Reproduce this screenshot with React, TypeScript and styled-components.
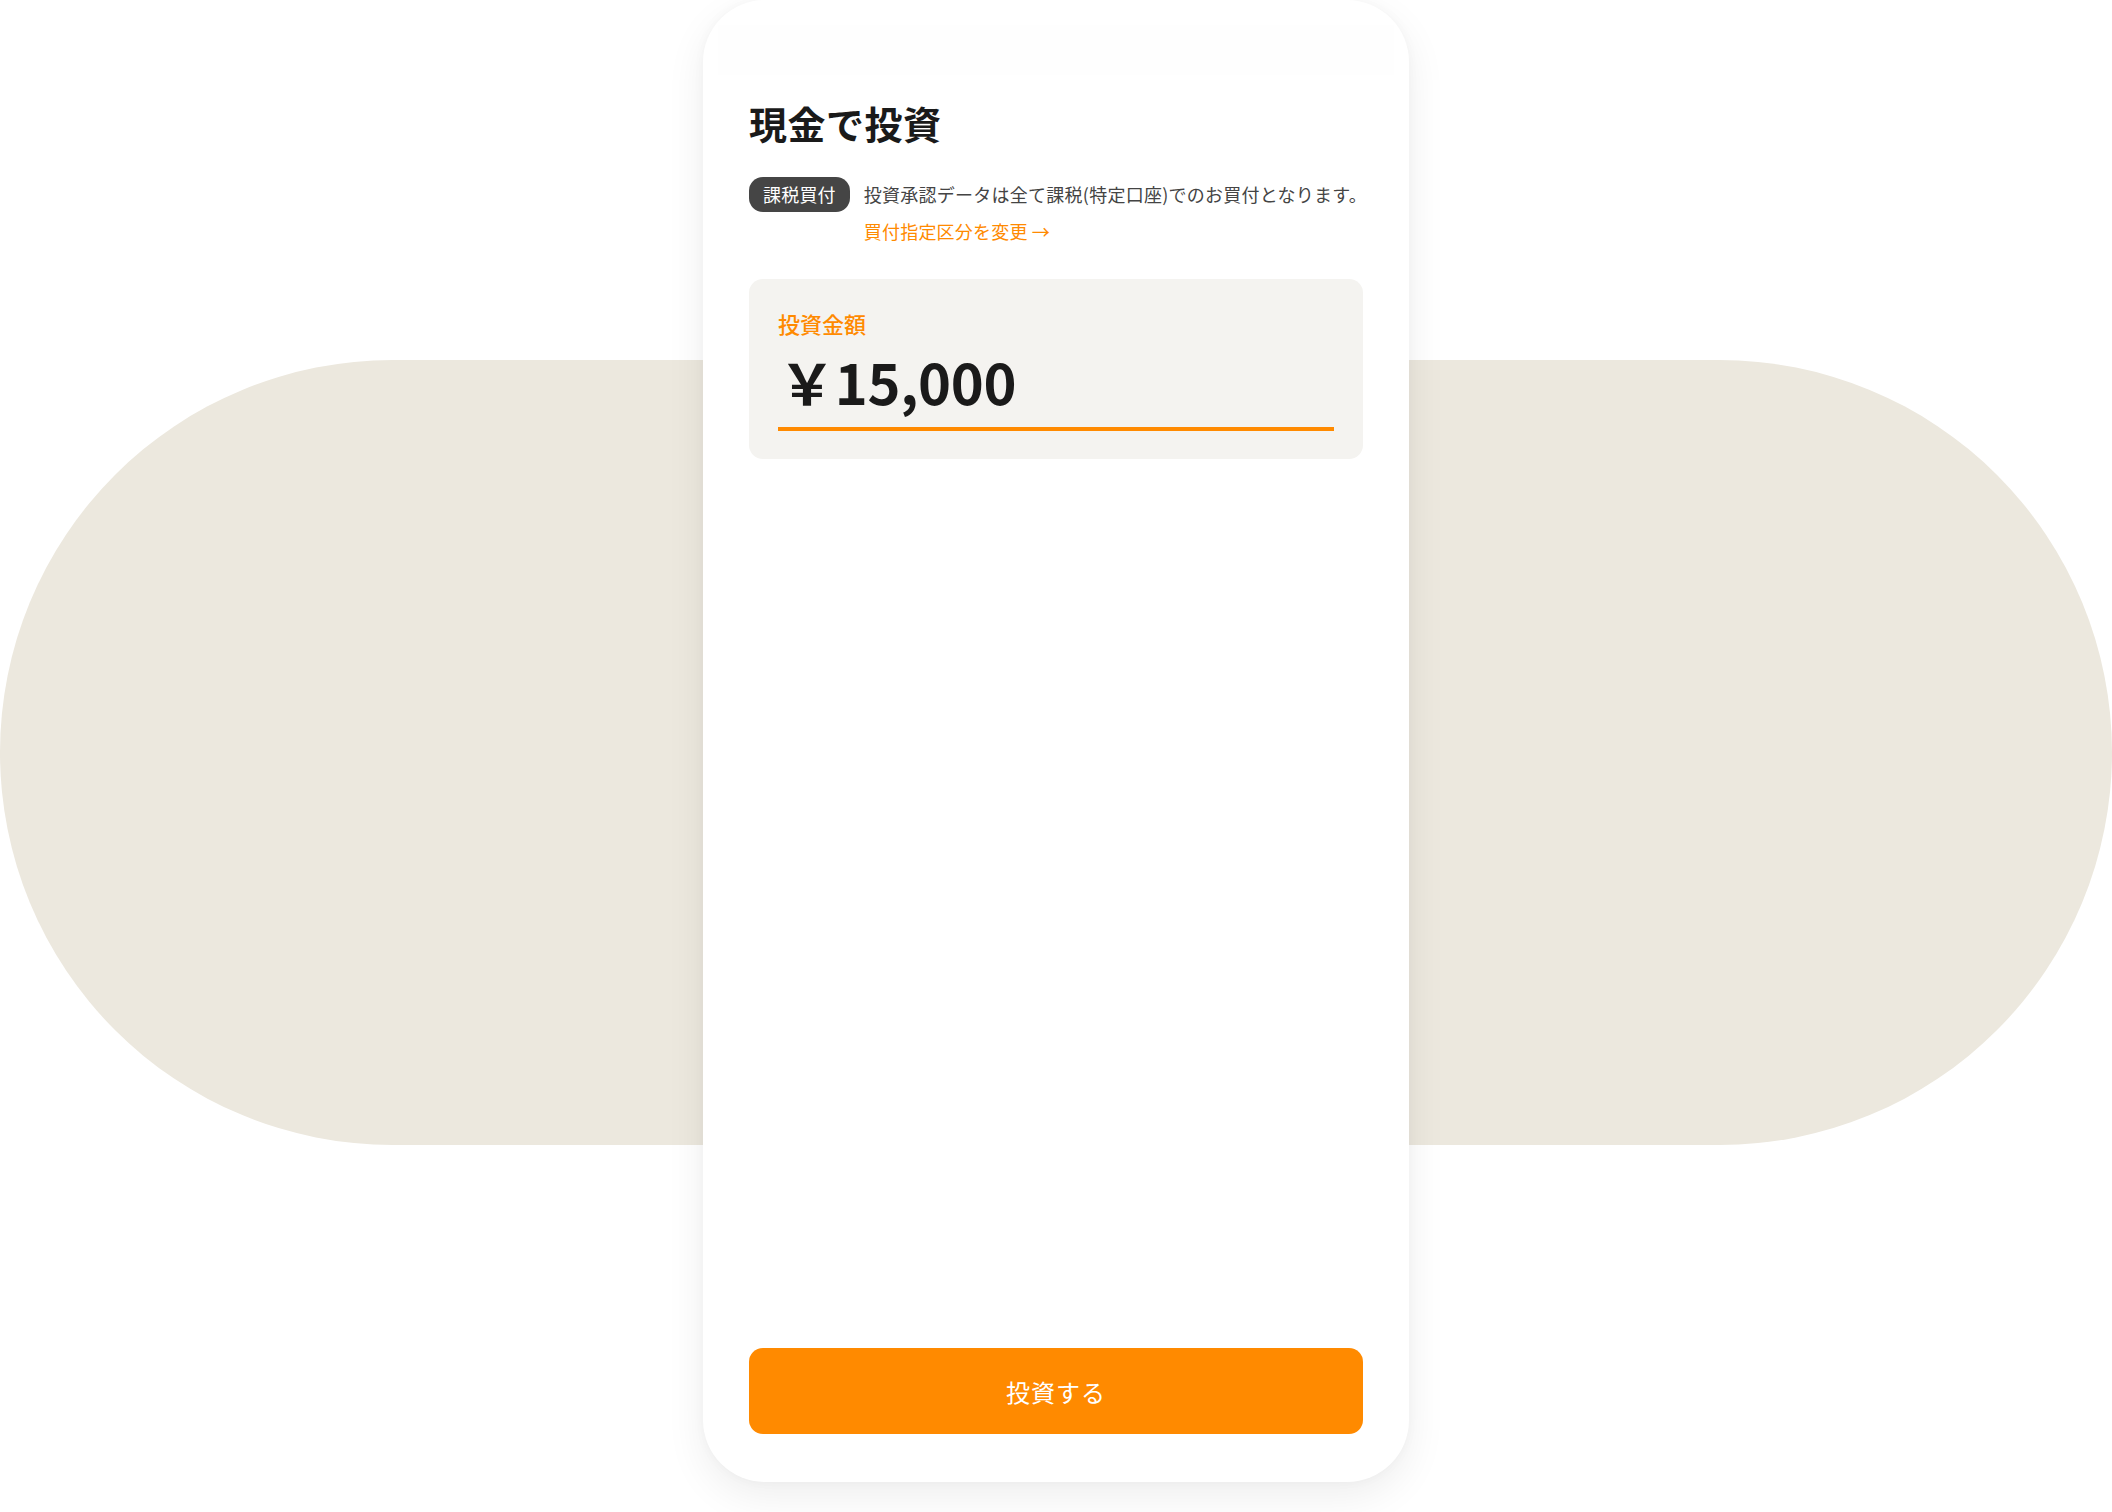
import React from "react";
import styled, { createGlobalStyle } from "styled-components";

const GlobalStyle = createGlobalStyle`
  html, body {
    margin: 0;
    padding: 0;
    background: #ffffff;
  }
  body {
    font-family: "Noto Sans CJK JP", "Noto Sans", sans-serif;
    -webkit-font-smoothing: antialiased;
  }
  * { box-sizing: border-box; }
`;

const Stage = styled.div`
  display: grid;
  width: 2112px;
  height: 1512px;
  overflow: hidden;
`;

const Pill = styled.div`
  grid-area: 1 / 1;
  align-self: start;
  margin-top: 360px;
  height: 785px;
  width: 100%;
  border-radius: 400px;
  background: #ece8de;
`;

const Phone = styled.div`
  grid-area: 1 / 1;
  justify-self: center;
  align-self: start;
  width: 706px;
  height: 1482px;
  background: #ffffff;
  border-radius: 62px;
  box-shadow: 0 14px 40px rgba(0, 0, 0, 0.07), 0 0 12px rgba(0, 0, 0, 0.03);
  display: flex;
  flex-direction: column;
  padding: 25px 46px 48px;
`;

const StatusBar = styled.div`
  height: 50px;
  margin: 0 -31px;
  background: #fefefe;
`;

const Title = styled.h1`
  margin: 21px 0 0;
  font-size: 38px;
  line-height: 53px;
  font-weight: 700;
  color: #1a1a1a;
  letter-spacing: 0.5px;
`;

const NoticeRow = styled.div`
  display: flex;
  align-items: flex-start;
  gap: 14px;
  margin-top: 28px;
`;

const Badge = styled.span`
  flex: none;
  height: 35px;
  padding: 0 14px;
  border-radius: 14px;
  background: #454545;
  color: #ffffff;
  font-size: 18px;
  line-height: 35px;
  letter-spacing: 0.2px;
`;

const NoticeBody = styled.div`
  display: flex;
  flex-direction: column;
`;

const NoticeText = styled.p`
  margin: 0;
  font-size: 18px;
  line-height: 35px;
  color: #444444;
  letter-spacing: 0.25px;
  white-space: nowrap;
`;

const ChangeLink = styled.a`
  margin-top: 6px;
  font-size: 18px;
  line-height: 26px;
  color: #ff8a00;
  text-decoration: none;
  letter-spacing: 0.2px;
`;

const AmountCard = styled.div`
  margin-top: 35px;
  background: #f4f3f0;
  border-radius: 14px;
  padding: 28px 29px 28px;
  display: flex;
  flex-direction: column;
`;

const AmountLabel = styled.label`
  font-size: 22px;
  line-height: 33px;
  font-weight: 500;
  color: #ff8a00;
`;

const AmountField = styled.div`
  margin-top: 5px;
  padding-bottom: 10px;
  border-bottom: 4px solid #ff8a00;
`;

const AmountValue = styled.div`
  font-size: 56px;
  line-height: 72px;
  font-weight: 700;
  color: #1a1a1a;
  letter-spacing: -0.3px;
  padding-left: 1px;
`;

const Spacer = styled.div`
  flex: 1;
`;

const SubmitButton = styled.button`
  height: 86px;
  width: 100%;
  border: none;
  border-radius: 14px;
  background: #ff8a00;
  color: #ffffff;
  font-family: inherit;
  font-size: 24px;
  font-weight: 400;
  letter-spacing: 1px;
  cursor: pointer;
`;

export default function App() {
  return (
    <>
      <GlobalStyle />
      <Stage>
        <Pill />
        <Phone>
          <StatusBar />
          <Title>現金で投資</Title>
          <NoticeRow>
            <Badge>課税買付</Badge>
            <NoticeBody>
              <NoticeText>投資承認データは全て課税(特定口座)でのお買付となります。</NoticeText>
              <ChangeLink href="#">買付指定区分を変更 →</ChangeLink>
            </NoticeBody>
          </NoticeRow>
          <AmountCard>
            <AmountLabel>投資金額</AmountLabel>
            <AmountField>
              <AmountValue>￥15,000</AmountValue>
            </AmountField>
          </AmountCard>
          <Spacer />
          <SubmitButton>投資する</SubmitButton>
        </Phone>
      </Stage>
    </>
  );
}
